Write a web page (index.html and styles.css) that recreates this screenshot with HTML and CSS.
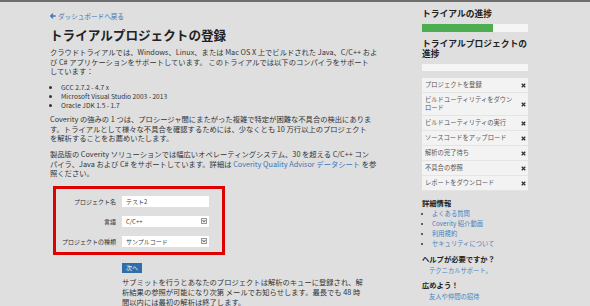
FILE: index.html
```html
<!DOCTYPE html>
<html lang="ja">
<head>
    <meta charset="UTF-8">
    <meta name="viewport" content="width=device-width, initial-scale=1.0">
    <title>トライアルプロジェクトの登録</title>
    <link rel="stylesheet" href="styles.css">
</head>
<body>
    <div class="page">
        <div class="main">
            <a class="back" href="#">
                <svg width="6" height="6" viewBox="0 0 10 10"><path d="M5 1 L1 5 L5 9 M1.5 5 H9.5" fill="none" stroke="#3d75b4" stroke-width="2.2"/></svg>
                ダッシュボードへ戻る
            </a>
            <h1>トライアルプロジェクトの登録</h1>

            <p>クラウドトライアルでは、Windows、Linux、または Mac OS X 上でビルドされた Java、C/C++ およ<br>び C# アプリケーションをサポートしています。 このトライアルでは以下のコンパイラをサポート<br>しています：</p>
            <ul class="compilers">
                <li>GCC 2.7.2 - 4.7 x</li>
                <li>Microsoft Visual Studio 2003 - 2013</li>
                <li>Oracle JDK 1.5 - 1.7</li>
            </ul>
            <p>Coverity の強みの 1 つは、プロシージャ間にまたがった複雑で特定が困難な不具合の検出にありま<br>す。トライアルとして様々な不具合を確認するためには、少なくとも 10 万行以上のプロジェクト<br>を解析することをお薦めいたします。</p>
            <p>製品版の Coverity ソリューションでは幅広いオペレーティングシステム、30 を超える C/C++ コン<br>パイラ、Java および C# をサポートしています。詳細は <a href="#">Coverity Quality Advisor データシート</a> を参<br>照ください。</p>

            <form class="register">
                <div class="row">
                    <label>プロジェクト名</label>
                    <input type="text" value="テスト2">
                </div>
                <div class="row">
                    <label>言語</label>
                    <div class="select">
                        <select><option>C/C++</option></select>
                        <svg class="arrow" width="6" height="6" viewBox="0 0 6 6"><rect x="0.5" y="0.5" width="5" height="5" fill="#eee" stroke="#999"/><path d="M1.6 2.2 L3 3.8 L4.4 2.2" fill="none" stroke="#333" stroke-width="0.9"/></svg>
                    </div>
                </div>
                <div class="row">
                    <label>プロジェクトの種類</label>
                    <div class="select">
                        <select><option>サンプルコード</option></select>
                        <svg class="arrow" width="6" height="6" viewBox="0 0 6 6"><rect x="0.5" y="0.5" width="5" height="5" fill="#eee" stroke="#999"/><path d="M1.6 2.2 L3 3.8 L4.4 2.2" fill="none" stroke="#333" stroke-width="0.9"/></svg>
                    </div>
                </div>
            </form>

            <div class="submit">
                <button>次へ</button>
                <p>サブミットを行うとあなたのプロジェクトは解析のキューに登録され、解<br>析結果の参照が可能になり次第 メールでお知らせします。最長でも 48 時<br>間以内には最初の解析は終了します。</p>
            </div>
        </div>

        <div class="side">
            <h3 class="side-title">トライアルの進捗</h3>
            <div class="bar"><div class="fill" style="width: 67%;"></div></div>
            <h3 class="side-title">トライアルプロジェクトの進捗</h3>
            <div class="bar thin"></div>

            <ul class="steps">
                <li><span>プロジェクトを登録</span><svg width="5" height="5" viewBox="0 0 10 10"><path d="M1.5 1.5 L8.5 8.5 M8.5 1.5 L1.5 8.5" stroke="#333" stroke-width="2.6"/></svg></li>
                <li><span>ビルドユーティリティをダウンロード</span><svg width="5" height="5" viewBox="0 0 10 10"><path d="M1.5 1.5 L8.5 8.5 M8.5 1.5 L1.5 8.5" stroke="#333" stroke-width="2.6"/></svg></li>
                <li><span>ビルドユーティリティの実行</span><svg width="5" height="5" viewBox="0 0 10 10"><path d="M1.5 1.5 L8.5 8.5 M8.5 1.5 L1.5 8.5" stroke="#333" stroke-width="2.6"/></svg></li>
                <li><span>ソースコードをアップロード</span><svg width="5" height="5" viewBox="0 0 10 10"><path d="M1.5 1.5 L8.5 8.5 M8.5 1.5 L1.5 8.5" stroke="#333" stroke-width="2.6"/></svg></li>
                <li><span>解析の完了待ち</span><svg width="5" height="5" viewBox="0 0 10 10"><path d="M1.5 1.5 L8.5 8.5 M8.5 1.5 L1.5 8.5" stroke="#333" stroke-width="2.6"/></svg></li>
                <li><span>不具合の参照</span><svg width="5" height="5" viewBox="0 0 10 10"><path d="M1.5 1.5 L8.5 8.5 M8.5 1.5 L1.5 8.5" stroke="#333" stroke-width="2.6"/></svg></li>
                <li><span>レポートをダウンロード</span><svg width="5" height="5" viewBox="0 0 10 10"><path d="M1.5 1.5 L8.5 8.5 M8.5 1.5 L1.5 8.5" stroke="#333" stroke-width="2.6"/></svg></li>
            </ul>

            <h4 class="info-title">詳細情報</h4>
            <ul class="links">
                <li><a href="#">よくある質問</a></li>
                <li><a href="#">Coverity 紹介動画</a></li>
                <li><a href="#">利用規約</a></li>
                <li><a href="#">セキュリティについて</a></li>
            </ul>

            <h4 class="help-title">ヘルプが必要ですか？</h4>
            <a class="side-link" href="#">テクニカルサポート。</a>

            <h4 class="help-title share">広めよう！</h4>
            <a class="side-link" href="#">友人や仲間の招待</a>
        </div>
    </div>
</body>
</html>
```

FILE: styles.css
```css
* {
    box-sizing: border-box;
}
body {
    margin: 0;
    background: #dfdfdf;
    border-top: 2px solid #6e6e6e;
    font-family: "Noto Sans CJK JP", sans-serif;
    color: #333;
}
a {
    color: #3b74b5;
    text-decoration: none;
}
.page {
    display: flex;
    padding-left: 50px;
    gap: 52px;
}
.main {
    width: 320px;
}
.back {
    display: flex;
    align-items: center;
    gap: 2px;
    margin-top: 9px;
    font-size: 6.6px;
    line-height: 10px;
}
h1 {
    margin: 6px 0 5px;
    font-size: 12.6px;
    line-height: 16px;
    color: #222;
}
.main p {
    margin: 0 0 6.5px;
    font-size: 7.3px;
    line-height: 9.5px;
    white-space: nowrap;
}
.compilers {
    margin: 0 0 5px;
    padding-left: 11px;
    font-size: 6.6px;
    line-height: 9px;
}
.register {
    display: flex;
    flex-direction: column;
    gap: 9px;
    width: 172px;
    margin: 7px 0 0 3px;
    padding: 7px 13px 5px 3px;
    border: 3px solid #e10000;
}
.row {
    display: flex;
    align-items: center;
    gap: 6px;
}
.row label {
    width: 57px;
    text-align: right;
    font-size: 6px;
    white-space: nowrap;
}
.row input,
.row select {
    display: block;
    width: 87px;
    height: 11px;
    padding: 0 4px;
    border: none;
    border-radius: 0;
    background: #fff;
    font-family: inherit;
    font-size: 6px;
    line-height: 11px;
    color: #444;
    appearance: none;
    outline: none;
}
.select {
    position: relative;
    width: 87px;
    height: 11px;
}
.select .arrow {
    position: absolute;
    right: 2px;
    top: 2.5px;
}
.submit {
    margin: 8px 0 0 72px;
}
.submit button {
    display: block;
    width: 20px;
    height: 10px;
    padding: 0;
    border: none;
    background: #2f6ea8;
    color: #fff;
    font-family: inherit;
    font-size: 6px;
    line-height: 10px;
}
.main .submit p {
    margin: 4px 0 0;
    font-size: 7.3px;
    line-height: 10px;
}
.side {
    width: 106px;
}
.side-title {
    margin: 6.5px 0 0;
    font-size: 8.75px;
    line-height: 10px;
    color: #222;
}
.bar {
    height: 8px;
    margin-top: 5.5px;
    background: #f5f5f5;
}
.bar.thin {
    height: 7px;
}
.fill {
    height: 100%;
    background: #4cae50;
}
.steps {
    list-style: none;
    margin: 7px 0 0;
    padding: 0;
}
.steps li {
    display: flex;
    justify-content: space-between;
    align-items: center;
    padding: 3px 2px 3px 3px;
    border-bottom: 1px solid #e4e4e4;
    background: #f3f3f3;
    font-size: 6.3px;
    line-height: 8px;
    color: #555;
}
.steps li span {
    max-width: 90px;
}
.steps li svg {
    flex-shrink: 0;
}
.info-title,
.help-title {
    margin: 7px 0 0;
    font-size: 7.3px;
    line-height: 10px;
    color: #222;
}
.links {
    margin: 1px 0 0;
    padding-left: 10px;
    font-size: 6.3px;
    line-height: 10px;
}
.links a,
.side-link {
    color: #4a80bb;
}
.help-title {
    margin-top: 5px;
}
.help-title.share {
    margin-top: 4px;
}
.side-link {
    display: block;
    margin-top: 2px;
    padding-left: 7px;
    font-size: 6.3px;
    line-height: 10px;
}
```
